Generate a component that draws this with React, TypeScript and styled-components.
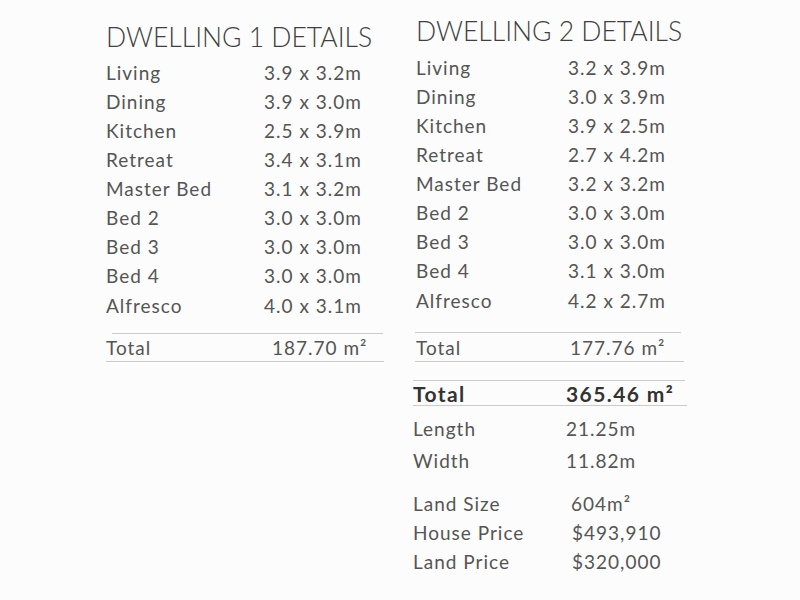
import React from "react";
import styled, { createGlobalStyle } from "styled-components";

const Global = createGlobalStyle`
  html, body { margin: 0; padding: 0; background: #fcfcfc; }
  body { font-family: "Lato", "Open Sans", sans-serif; color: #555; }
`;

const Page = styled.div`
  width: 800px;
  height: 600px;
  box-sizing: border-box;
  padding-left: 106px;
  display: grid;
  grid-template-columns: 310px 290px;
  align-items: start;
`;

const Column = styled.section<{ $top: number }>`
  display: flex;
  flex-direction: column;
  padding-top: ${(p) => p.$top}px;
`;

const Heading = styled.h2<{ $mb: number }>`
  margin: 0 0 ${(p) => p.$mb}px;
  font-size: 26.5px;
  font-weight: 300;
  letter-spacing: 0;
  line-height: 34px;
  color: #404040;
  white-space: nowrap;
`;

const Row = styled.div<{ $labelW: number; $h?: number }>`
  display: grid;
  grid-template-columns: ${(p) => p.$labelW}px auto;
  height: ${(p) => p.$h ?? 29}px;
  align-items: center;
  font-size: 19px;
  letter-spacing: 1px;
  color: #555;
  white-space: nowrap;
`;

const Divider = styled.div<{ $inset?: number; $w: number; $mt?: number }>`
  height: 1px;
  background: #cbcbcb;
  margin-left: ${(p) => p.$inset ?? 0}px;
  width: ${(p) => p.$w}px;
  margin-top: ${(p) => p.$mt ?? 0}px;
`;

const Summary = styled.div`
  display: flex;
  flex-direction: column;
  margin-left: -3px;
`;

const BoldRow = styled(Row)`
  font-weight: 700;
  font-size: 21px;
  letter-spacing: 1.4px;
  color: #333;
`;

const Spacer = styled.div<{ $h: number }>`
  height: ${(p) => p.$h}px;
`;

type Item = [string, string];

const d1: Item[] = [
  ["Living", "3.9 x 3.2m"],
  ["Dining", "3.9 x 3.0m"],
  ["Kitchen", "2.5 x 3.9m"],
  ["Retreat", "3.4 x 3.1m"],
  ["Master Bed", "3.1 x 3.2m"],
  ["Bed 2", "3.0 x 3.0m"],
  ["Bed 3", "3.0 x 3.0m"],
  ["Bed 4", "3.0 x 3.0m"],
];

const d2: Item[] = [
  ["Living", "3.2 x 3.9m"],
  ["Dining", "3.0 x 3.9m"],
  ["Kitchen", "3.9 x 2.5m"],
  ["Retreat", "2.7 x 4.2m"],
  ["Master Bed", "3.2 x 3.2m"],
  ["Bed 2", "3.0 x 3.0m"],
  ["Bed 3", "3.0 x 3.0m"],
  ["Bed 4", "3.1 x 3.0m"],
];

export default function App() {
  return (
    <>
      <Global />
      <Page>
        <Column $top={20}>
          <Heading $mb={4}>DWELLING 1 DETAILS</Heading>
          {d1.map(([k, v]) => (
            <Row key={k} $labelW={158}>
              <span>{k}</span>
              <span>{v}</span>
            </Row>
          ))}
          <Row $labelW={158} $h={31}>
            <span>Alfresco</span>
            <span>4.0 x 3.1m</span>
          </Row>
          <Divider $inset={6} $w={271} $mt={12} />
          <Row $labelW={166} $h={27}>
            <span>Total</span>
            <span>187.70 m²</span>
          </Row>
          <Divider $w={278} />
        </Column>
        <Column $top={14}>
          <Heading $mb={5}>DWELLING 2 DETAILS</Heading>
          {d2.map(([k, v]) => (
            <Row key={k} $labelW={152}>
              <span>{k}</span>
              <span>{v}</span>
            </Row>
          ))}
          <Row $labelW={152} $h={31}>
            <span>Alfresco</span>
            <span>4.2 x 2.7m</span>
          </Row>
          <Divider $inset={-1} $w={266} $mt={16} />
          <Row $labelW={154} $h={28}>
            <span>Total</span>
            <span>177.76 m²</span>
          </Row>
          <Divider $inset={-1} $w={269} />
          <Summary>
            <Divider $w={272} $mt={18} />
            <BoldRow $labelW={153} $h={24}>
              <span>Total</span>
              <span>365.46 m²</span>
            </BoldRow>
            <Divider $w={274} />
            <Spacer $h={6} />
            <Row $labelW={153} $h={32}>
              <span>Length</span>
              <span>21.25m</span>
            </Row>
            <Row $labelW={153} $h={32}>
              <span>Width</span>
              <span>11.82m</span>
            </Row>
            <Spacer $h={13} />
            <Row $labelW={158}>
              <span>Land Size</span>
              <span>604m²</span>
            </Row>
            <Row $labelW={159}>
              <span>House Price</span>
              <span>$493,910</span>
            </Row>
            <Row $labelW={159}>
              <span>Land Price</span>
              <span>$320,000</span>
            </Row>
          </Summary>
        </Column>
      </Page>
    </>
  );
}
